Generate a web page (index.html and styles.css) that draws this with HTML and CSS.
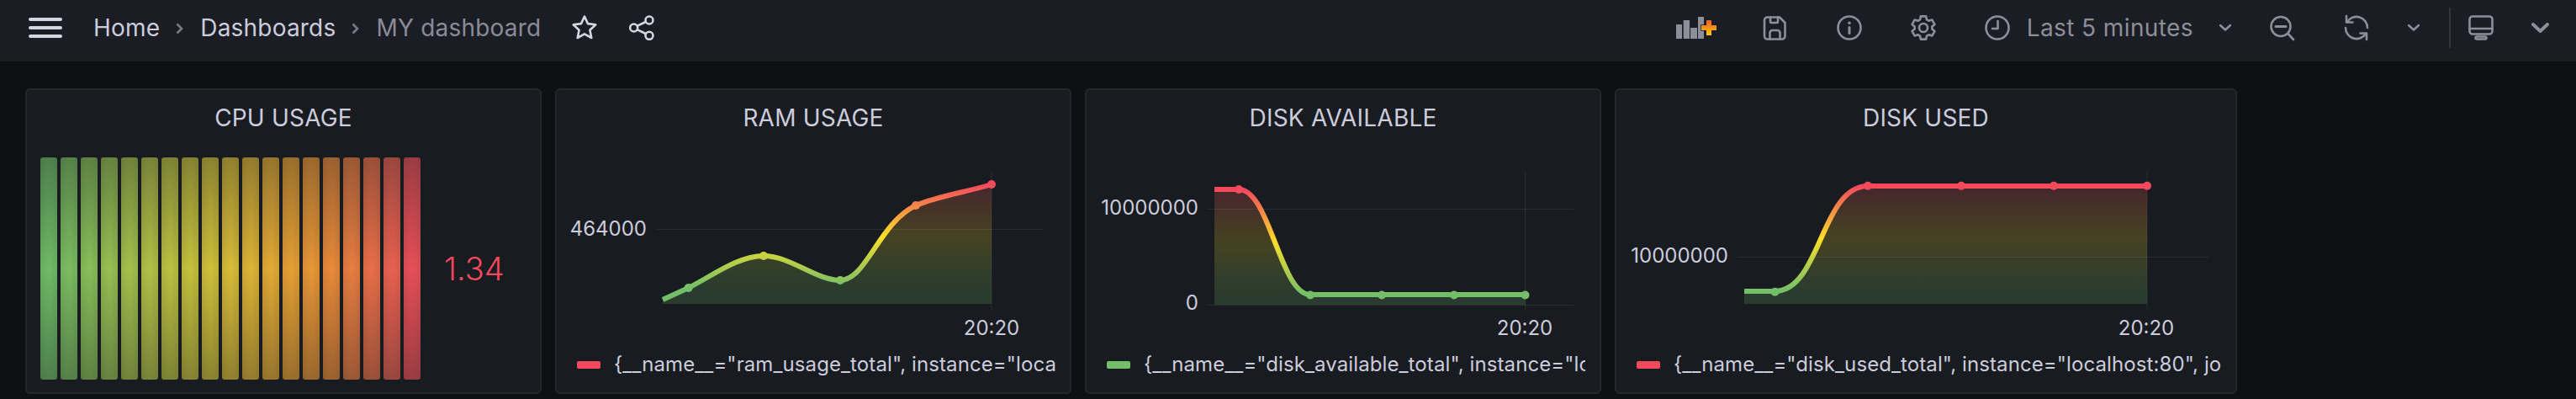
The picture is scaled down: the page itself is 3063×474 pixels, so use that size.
FILE: index.html
```html
<!DOCTYPE html>
<html lang="en">
<head>
<meta charset="utf-8">
<title>MY dashboard</title>
<link rel="stylesheet" href="styles.css">
</head>
<body>
<svg class="defs" width="0" height="0" aria-hidden="true">
  <defs>
    <linearGradient id="plus" x1="0" y1="0" x2="0" y2="1"><stop offset="0" stop-color="#f05a28"/><stop offset="1" stop-color="#fbca0a"/></linearGradient>
    <linearGradient id="ramLine" gradientUnits="userSpaceOnUse" x1="0" y1="219" x2="0" y2="342"><stop offset="0" stop-color="#f2495c"/><stop offset=".5" stop-color="#fade2a"/><stop offset="1" stop-color="#73bf69"/></linearGradient>
    <linearGradient id="ramFill" gradientUnits="userSpaceOnUse" x1="0" y1="219" x2="0" y2="342"><stop offset="0" stop-color="#f2495c" stop-opacity=".22"/><stop offset=".5" stop-color="#fade2a" stop-opacity=".2"/><stop offset="1" stop-color="#73bf69" stop-opacity=".2"/></linearGradient>
    <linearGradient id="availLine" gradientUnits="userSpaceOnUse" x1="0" y1="225" x2="0" y2="350"><stop offset="0" stop-color="#f2495c"/><stop offset=".5" stop-color="#fade2a"/><stop offset="1" stop-color="#73bf69"/></linearGradient>
    <linearGradient id="availFill" gradientUnits="userSpaceOnUse" x1="0" y1="225" x2="0" y2="350"><stop offset="0" stop-color="#f2495c" stop-opacity=".22"/><stop offset=".5" stop-color="#fade2a" stop-opacity=".2"/><stop offset="1" stop-color="#73bf69" stop-opacity=".2"/></linearGradient>
    <linearGradient id="usedLine" gradientUnits="userSpaceOnUse" x1="0" y1="221" x2="0" y2="346"><stop offset="0" stop-color="#f2495c"/><stop offset=".5" stop-color="#fade2a"/><stop offset="1" stop-color="#73bf69"/></linearGradient>
    <linearGradient id="usedFill" gradientUnits="userSpaceOnUse" x1="0" y1="221" x2="0" y2="346"><stop offset="0" stop-color="#f2495c" stop-opacity=".22"/><stop offset=".5" stop-color="#fade2a" stop-opacity=".2"/><stop offset="1" stop-color="#73bf69" stop-opacity=".2"/></linearGradient>
  </defs>
</svg>
<header class="topbar">
  <div class="burger"><span></span><span></span><span></span></div>
  <nav class="crumbs">
    <span>Home</span>
    <svg class="crumb-sep" viewBox="0 0 9 14"><path d="M1.5 1.5 7 7l-5.500 5.500"/></svg>
    <span>Dashboards</span>
    <svg class="crumb-sep" viewBox="0 0 9 14"><path d="M1.500 1.500 7 7l-5.500 5.500"/></svg>
    <span class="crumb-current">MY dashboard</span>
  </nav>
  <svg class="ico ico-light star" viewBox="0 0 32 32"><path d="M16 2.500l4 8.600 9.300 1.200-6.900 6.400 1.900 9.300-8.300-4.700-8.300 4.700 1.900-9.300-6.900-6.400 9.300-1.200z"/></svg>
  <svg class="ico ico-light share" viewBox="0 0 32 32"><circle cx="25" cy="7" r="4.500"/><circle cx="6.700" cy="16" r="4.500"/><circle cx="25" cy="25.300" r="4.500"/><path d="M11 13.700 20.700 9M11 18.300 20.700 23"/></svg>

  <div class="actions">
    <svg class="addpanel" viewBox="0 0 48 32"><g class="addbars"><rect x="0" y="12" width="7" height="17"/><rect x="8.700" y="7" width="7.300" height="22"/><rect x="17" y="16" width="8" height="13"/><rect x="26" y="3" width="7" height="26"/></g><path class="addplus" d="M36 7h6v6h6v6h-6v6h-6v-6h-6v-6h6z"/></svg>
    <svg class="ico gap-54" viewBox="0 0 32 32"><path d="M6.500 3.500H21l6.500 6.500v16a3.500 3.500 0 0 1-3.500 3.500H6.500A3.500 3.500 0 0 1 3 26V7a3.500 3.500 0 0 1 3.500-3.500z"/><path d="M10 3.500V9a1 1 0 0 0 1 1h7a1 1 0 0 0 1-1V3.500M9.500 29.500V22a3 3 0 0 1 3-3h6a3 3 0 0 1 3 3v7.500"/></svg>
    <svg class="ico gap-56" viewBox="0 0 32 32"><circle cx="16" cy="16" r="13.500"/><path class="thick" d="M16 15.500v7"/><circle class="solid" cx="16" cy="10.300" r="1.800"/></svg>
    <svg class="ico gap-56" viewBox="0 0 32 32"><path d="M12.850 2.360h6.300l.78 3.900 2.530 1.470 3.780-1.280 3.150 5.460-3 2.630v2.920l3 2.630-3.150 5.460-3.780-1.280-2.530 1.470-.78 3.900h-6.300l-.78-3.900-2.530-1.470-3.780 1.280-3.150-5.460 3-2.630v-2.920l-3-2.630 3.150-5.460 3.780 1.280 2.530-1.470z"/><circle cx="16" cy="16" r="5"/></svg>
    <svg class="ico gap-56" viewBox="0 0 32 32"><circle cx="16" cy="16" r="13.500"/><path d="M16.500 8v9H10"/></svg>
    <span class="range">Last 5 minutes</span>
    <svg class="chev range-chev" viewBox="0 0 14 8"><path d="M1 1l6 5.500L13 1"/></svg>
    <svg class="ico gap-45" viewBox="0 0 32 32"><circle cx="14" cy="14.500" r="11.500"/><path class="thick" d="M8 14.500h12"/><path d="M22.500 23 29 30"/></svg>
    <svg class="ico gap-56" viewBox="0 0 32 32"><path d="M5 9A13 13 0 0 1 29 16M27 23A13 13 0 0 1 3 16"/><path d="M4 2v7.500h7.500M28 30v-7.500h-7.500"/></svg>
    <svg class="chev gap-45" viewBox="0 0 14 8"><path d="M1 1l6 5.500L13 1"/></svg>
    <span class="divider"></span>
    <svg class="ico gap-20" viewBox="0 0 32 32"><rect x="2.500" y="2.500" width="27" height="21" rx="3.500"/><path d="M2.500 17h27"/><rect x="9.500" y="26.500" width="13" height="3" rx="1.500"/></svg>
    <svg class="chev-big" viewBox="0 0 21 12"><path d="M2 2l8.500 8L19 2"/></svg>
  </div>
</header>

<main class="dashboard">
  <section class="panel panel-cpu">
    <h2 class="panel-title">CPU USAGE</h2>
    <div class="gauge">
      <div class="bars">
        <i class="bar" style="--c:#6fbb66"></i><i class="bar" style="--c:#7bbd60"></i><i class="bar" style="--c:#88bf58"></i><i class="bar" style="--c:#96c052"></i><i class="bar" style="--c:#a4c14c"></i><i class="bar" style="--c:#b1c146"></i><i class="bar" style="--c:#bbc141"></i><i class="bar" style="--c:#c5c13d"></i><i class="bar" style="--c:#cfc03a"></i><i class="bar" style="--c:#d8bc38"></i><i class="bar" style="--c:#deb436"></i><i class="bar" style="--c:#e3aa35"></i><i class="bar" style="--c:#e6a034"></i><i class="bar" style="--c:#e89636"></i><i class="bar" style="--c:#e98a3a"></i><i class="bar" style="--c:#e97d41"></i><i class="bar" style="--c:#e96f48"></i><i class="bar" style="--c:#e96150"></i><i class="bar" style="--c:#e85058"></i>
      </div>
      <span class="gauge-value">1.34</span>
    </div>
  </section>

  <section class="panel panel-std">
    <h2 class="panel-title">RAM USAGE</h2>
    <svg class="chart" viewBox="662 169 610 236">
      <path class="grid" d="M781 272.500H1241M1179 203V369"/>
      <path fill="url(#ramFill)" d="M788 356L818.600 342C848 327 878 304 908 304C940 304 970 333 999 333C1030 333 1045 265 1089 244C1115 233 1150 228 1179 219V361H788Z"/>
      <path class="line" stroke="url(#ramLine)" d="M788 356L818.600 342C848 327 878 304 908 304C940 304 970 333 999 333C1030 333 1045 265 1089 244C1115 233 1150 228 1179 219"/>
      <g fill="url(#ramLine)"><circle cx="818.600" cy="342" r="5"/><circle cx="908" cy="304" r="5"/><circle cx="999" cy="333" r="5"/><circle cx="1089" cy="244" r="5"/><circle cx="1179" cy="219" r="5"/></g>
      <text class="axis" x="769" y="280" text-anchor="end">464000</text>
      <text class="axis" x="1179" y="398" text-anchor="middle">20:20</text>
    </svg>
    <div class="legend"><span class="swatch swatch-red"></span><span class="legend-text">{__name__="ram_usage_total", instance="loca</span></div>
  </section>

  <section class="panel panel-std">
    <h2 class="panel-title">DISK AVAILABLE</h2>
    <svg class="chart" viewBox="1292 169 610 236">
      <path class="grid" d="M1436 248.500H1871M1436 362.500H1871M1813.500 203V369"/>
      <path fill="url(#availFill)" d="M1444 225H1473C1510 225 1522 350 1558 350H1813.500V362H1444Z"/>
      <path class="line" stroke="url(#availLine)" d="M1444 225H1473C1510 225 1522 350 1558 350H1813.500"/>
      <g fill="url(#availLine)"><circle cx="1473" cy="225" r="5"/></g>
      <g fill="#73bf69"><circle cx="1558" cy="350.500" r="5"/><circle cx="1643" cy="350.500" r="5"/><circle cx="1729" cy="350.500" r="5"/><circle cx="1813.500" cy="350.500" r="5"/></g>
      <text class="axis" x="1425" y="255" text-anchor="end">10000000</text>
      <text class="axis" x="1425" y="368" text-anchor="end">0</text>
      <text class="axis" x="1813" y="398" text-anchor="middle">20:20</text>
    </svg>
    <div class="legend"><span class="swatch swatch-green"></span><span class="legend-text">{__name__="disk_available_total", instance="lo</span></div>
  </section>

  <section class="panel panel-wide">
    <h2 class="panel-title">DISK USED</h2>
    <svg class="chart" viewBox="1922 169 736 236">
      <path class="grid" d="M2067 305.500H2626M2553 203V369"/>
      <path fill="url(#usedFill)" d="M2074 346H2110C2165 346 2165 221 2221 221H2553V361H2074Z"/>
      <path class="line" stroke="url(#usedLine)" d="M2074 346H2110C2165 346 2165 221 2221 221H2553"/>
      <circle fill="#73bf69" cx="2110.500" cy="346.700" r="5"/>
      <g fill="#f2495c"><circle cx="2221" cy="220.700" r="5"/><circle cx="2332" cy="220.700" r="5"/><circle cx="2442" cy="220.700" r="5"/><circle cx="2553" cy="220.700" r="5"/></g>
      <text class="axis" x="2055" y="312" text-anchor="end">10000000</text>
      <text class="axis" x="2552" y="398" text-anchor="middle">20:20</text>
    </svg>
    <div class="legend"><span class="swatch swatch-red"></span><span class="legend-text">{__name__="disk_used_total", instance="localhost:80", jo</span></div>
  </section>
</main>
</body>
</html>
```
FILE: styles.css
```css
* { box-sizing: border-box; }
html, body { margin: 0; height: 100%; }
body {
  background: #0e1014;
  color: #ccccdc;
  font-family: Inter, "Noto Sans", sans-serif;
  overflow: hidden;
}
.defs { position: absolute; }

.topbar {
  display: flex;
  align-items: center;
  height: 73px;
  padding: 0 32px 7px 34px;
  background: #1a1d23;
}
.burger { display: flex; flex-direction: column; gap: 6px; width: 40px; }
.burger span { display: block; height: 4px; background: #d4d4e2; border-radius: 2px; }

.crumbs {
  display: flex;
  align-items: center;
  margin-left: 37px;
  font-size: 28px;
  line-height: 40px;
  letter-spacing: .2px;
  color: #ccccdc;
  white-space: nowrap;
}
.crumb-sep {
  width: 9px;
  height: 14px;
  margin: 2px 20px 0 19px;
  fill: none;
  stroke: #7a7a85;
  stroke-width: 2.6;
}
.crumb-current { color: #8b8b97; }

.ico {
  flex: none;
  width: 32px;
  height: 32px;
  fill: none;
  stroke: #8e8e99;
  stroke-width: 2.6;
  stroke-linejoin: round;
  stroke-linecap: round;
}
.ico .thick { stroke-width: 3; }
.ico .solid { fill: #8e8e99; stroke: none; }
.ico-light { stroke: #d4d4e2; }
.star { margin-left: 36px; }
.share { margin-left: 36px; }

.actions { display: flex; align-items: center; margin-left: auto; }
.addpanel { width: 48px; height: 32px; flex: none; overflow: visible; }
.addbars { fill: #8e8e99; }
.addplus { fill: url(#plus); stroke: #1a1d23; stroke-width: 1.5; paint-order: stroke; }
.gap-54 { margin-left: 54px; }
.gap-56 { margin-left: 56px; }
.gap-45 { margin-left: 45px; }
.gap-20 { margin-left: 20px; }

.range {
  margin-left: 19px;
  font-size: 28px;
  line-height: 40px;
  letter-spacing: .4px;
  color: #8e8e99;
  white-space: nowrap;
}
.chev { flex: none; width: 14px; height: 8px; fill: none; stroke: #8e8e99; stroke-width: 2.6; stroke-linecap: round; stroke-linejoin: round; }
.range-chev { margin-left: 31px; }
.chev-big { flex: none; width: 21px; height: 12px; margin-left: 44px; fill: none; stroke: #8e8e99; stroke-width: 4; stroke-linecap: round; stroke-linejoin: round; }
.divider { flex: none; width: 2px; height: 48px; margin-left: 35px; background: #33363c; }

.dashboard {
  display: flex;
  align-items: stretch;
  gap: 16px;
  height: 363px;
  margin: 32px 0 0 30px;
}
.panel {
  display: flex;
  flex-direction: column;
  flex: none;
  background: #181b20;
  border: 2px solid #24272d;
  border-radius: 6px;
  overflow: hidden;
}
.panel-cpu { width: 614px; }
.panel-std { width: 614px; }
.panel-wide { width: 740px; }
.panel-title {
  margin: 0;
  height: 62px;
  padding-top: 2px;
  font-size: 28px;
  font-weight: 400;
  letter-spacing: .2px;
  line-height: 62px;
  text-align: center;
  color: #ccccdc;
}

.gauge {
  display: flex;
  align-items: center;
  gap: 28px;
  height: 264px;
  margin: 18px 0 0 16px;
}
.bars { display: flex; gap: 4px; height: 100%; }
.bar {
  display: block;
  width: 20px;
  border-radius: 3px;
  background:
    linear-gradient(180deg, rgba(24,27,32,.36), rgba(24,27,32,0) 50%, rgba(24,27,32,.36)),
    linear-gradient(90deg, rgba(24,27,32,.08), rgba(24,27,32,0) 50%, rgba(24,27,32,.08)),
    var(--c);
}
.gauge-value { font-size: 38px; font-weight: 300; color: #f2495c; white-space: nowrap; }

.chart { display: block; width: 100%; height: 236px; flex: none; }
.grid { fill: none; stroke: rgba(204,204,220,.1); stroke-width: 1; }
.line { fill: none; stroke-width: 6; stroke-linejoin: round; }
.axis { font-family: Inter, "Noto Sans", sans-serif; font-size: 24px; fill: #ccccdc; }

.legend {
  display: flex;
  align-items: center;
  height: 56px;
  padding: 0 17px 0 24px;
  white-space: nowrap;
}
.swatch { flex: none; width: 28px; height: 9px; margin-right: 16px; border-radius: 2px; }
.swatch-red { background: #f2495c; }
.swatch-green { background: #73bf69; }
.legend-text { flex: 1; min-width: 0; overflow: hidden; font-size: 24px; line-height: 32px; letter-spacing: .1px; color: #ccccdc; }
```
